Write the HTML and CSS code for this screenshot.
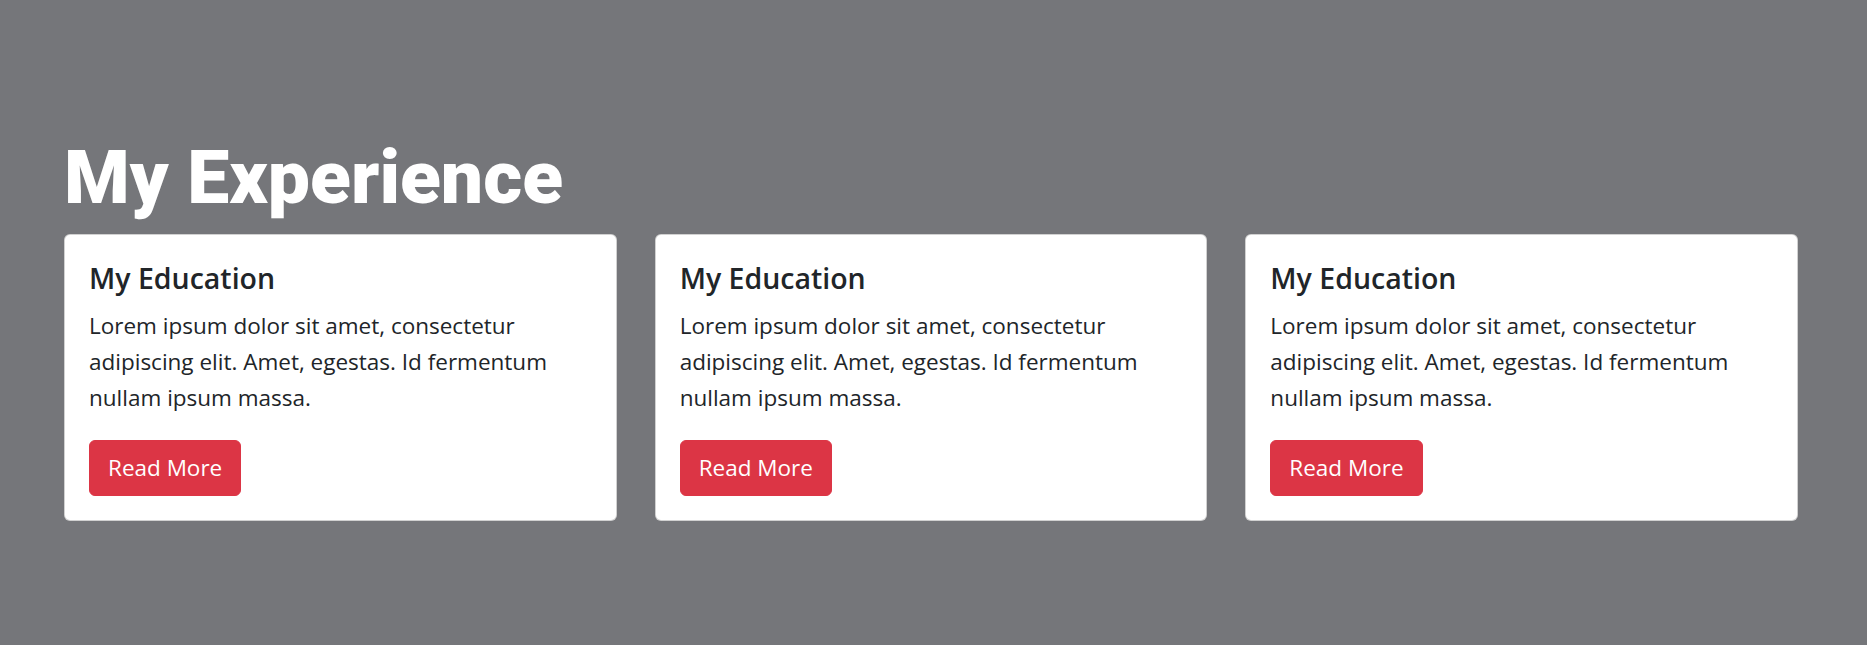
FILE: index.html
```html
<!DOCTYPE html>
<html lang="en">
<head>
<meta charset="utf-8">
<title>My Experience</title>
<link rel="stylesheet" href="styles.css">
</head>
<body>
<section class="experience">
  <h1 class="title">My Experience</h1>
  <div class="cards">
    <div class="card">
      <h5 class="card-title">My Education</h5>
      <p class="card-text">Lorem ipsum dolor sit amet, consectetur adipiscing elit. Amet, egestas. Id fermentum nullam ipsum massa.</p>
      <a class="btn" href="#">Read More</a>
    </div>
    <div class="card">
      <h5 class="card-title">My Education</h5>
      <p class="card-text">Lorem ipsum dolor sit amet, consectetur adipiscing elit. Amet, egestas. Id fermentum nullam ipsum massa.</p>
      <a class="btn" href="#">Read More</a>
    </div>
    <div class="card">
      <h5 class="card-title">My Education</h5>
      <p class="card-text">Lorem ipsum dolor sit amet, consectetur adipiscing elit. Amet, egestas. Id fermentum nullam ipsum massa.</p>
      <a class="btn" href="#">Read More</a>
    </div>
  </div>
</section>
</body>
</html>
```

FILE: styles.css
```css
html, body {
  margin: 0;
  padding: 0;
}
body {
  background: #75767a;
  color: #212529;
  font-family: "Open Sans", "Noto Sans", sans-serif;
  height: 645px;
  overflow: hidden;
}
.experience {
  padding: 132px 69px 0 64px;
}
.title {
  margin: 0 0 12px 0;
  font-family: Roboto, sans-serif;
  font-weight: 900;
  font-size: 75px;
  line-height: 1.2;
  color: #ffffff;
}
.cards {
  display: grid;
  grid-template-columns: repeat(3, 1fr);
  gap: 38px;
}
.card {
  background: #ffffff;
  border: 1.5px solid rgba(0, 0, 0, 0.18);
  border-radius: 6px;
  padding: 25px 24px 24px;
  display: flex;
  flex-direction: column;
  align-items: flex-start;
}
.card-title {
  margin: 0 0 12px 0;
  font-size: 28.5px;
  font-weight: 600;
  line-height: 36px;
  color: #212529;
}
.card-text {
  margin: 0 0 24px 0;
  font-size: 22.5px;
  line-height: 36px;
}
.btn {
  display: inline-block;
  background: #dc3545;
  color: #ffffff;
  text-decoration: none;
  font-size: 22.5px;
  line-height: 36px;
  padding: 9px 18px;
  border: 1.5px solid #dc3545;
  border-radius: 6px;
}
```
